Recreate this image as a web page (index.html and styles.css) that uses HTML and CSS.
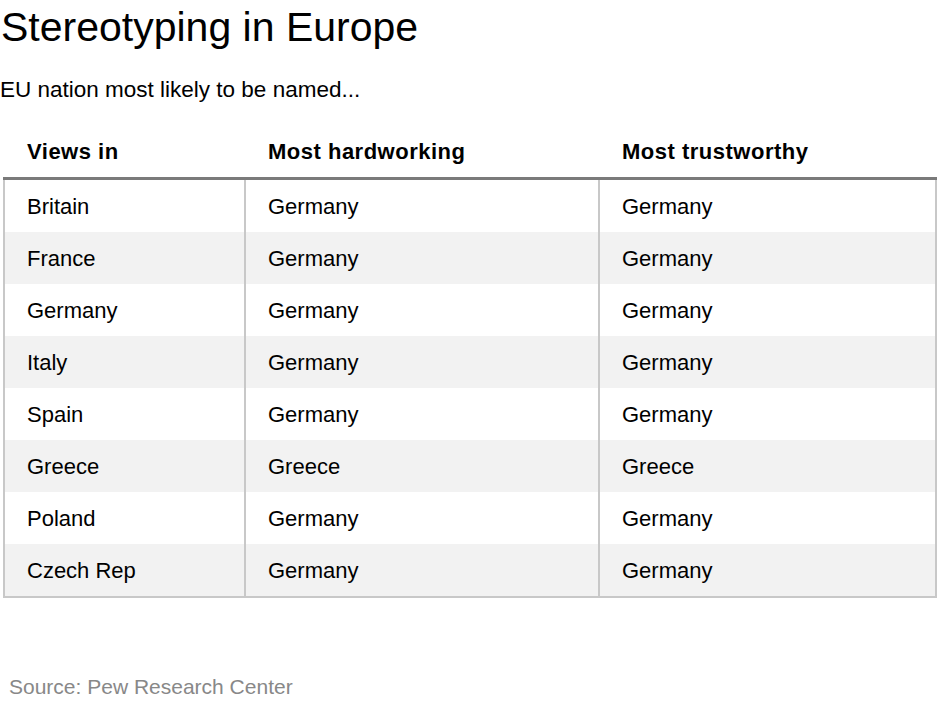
FILE: index.html
```html
<!DOCTYPE html>
<html lang="en">
<head>
<meta charset="utf-8">
<title>Stereotyping in Europe</title>
<link rel="stylesheet" href="styles.css">
</head>
<body>
<div class="page">
  <h1 class="title">Stereotyping in Europe</h1>
  <p class="subtitle">EU nation most likely to be named...</p>
  <table class="data">
    <thead>
      <tr><th class="c1">Views in</th><th class="c2">Most hardworking</th><th class="c3">Most trustworthy</th></tr>
    </thead>
    <tbody>
      <tr><td>Britain</td><td>Germany</td><td>Germany</td></tr>
      <tr><td>France</td><td>Germany</td><td>Germany</td></tr>
      <tr><td>Germany</td><td>Germany</td><td>Germany</td></tr>
      <tr><td>Italy</td><td>Germany</td><td>Germany</td></tr>
      <tr><td>Spain</td><td>Germany</td><td>Germany</td></tr>
      <tr><td>Greece</td><td>Greece</td><td>Greece</td></tr>
      <tr><td>Poland</td><td>Germany</td><td>Germany</td></tr>
      <tr><td>Czech Rep</td><td>Germany</td><td>Germany</td></tr>
    </tbody>
  </table>
  <p class="source">Source: Pew Research Center</p>
</div>
</body>
</html>
```
FILE: styles.css
```css
html, body {
  margin: 0;
  padding: 0;
  background: #fff;
}
body {
  font-family: "Liberation Sans", Arial, sans-serif;
  color: #000;
}
.page {
  width: 940px;
  height: 707px;
  display: flex;
  flex-direction: column;
}
.title {
  font-size: 41px;
  font-weight: normal;
  margin: 3px 0 0 1px;
  line-height: 48px;
}
.subtitle {
  font-size: 22.5px;
  margin: 26px 0 0 0;
  line-height: 26px;
}
.data {
  margin: 12px 0 0 3px;
  width: 934px;
  border-collapse: collapse;
  font-size: 22px;
  line-height: 26px;
}
.data th {
  text-align: left;
  font-weight: bold;
  letter-spacing: 0.5px;
  padding: 24px 0 12px 23px;
  border-bottom: 3px solid #7a7a7a;
}
.data th.c1 { width: 218px; }
.data th.c2 { width: 331px; }
.data td {
  padding: 14px 0 12px 22px;
  border-left: 2px solid #c8c8c8;
  border-right: 2px solid #c8c8c8;
  vertical-align: top;
}
.data tbody tr:nth-child(even) td {
  background: #f2f2f2;
}
.data tbody tr:last-child td {
  border-bottom: 2px solid #c8c8c8;
}
.source {
  margin: 77px 0 0 9px;
  font-size: 21px;
  line-height: 24px;
  color: #888;
}
```
